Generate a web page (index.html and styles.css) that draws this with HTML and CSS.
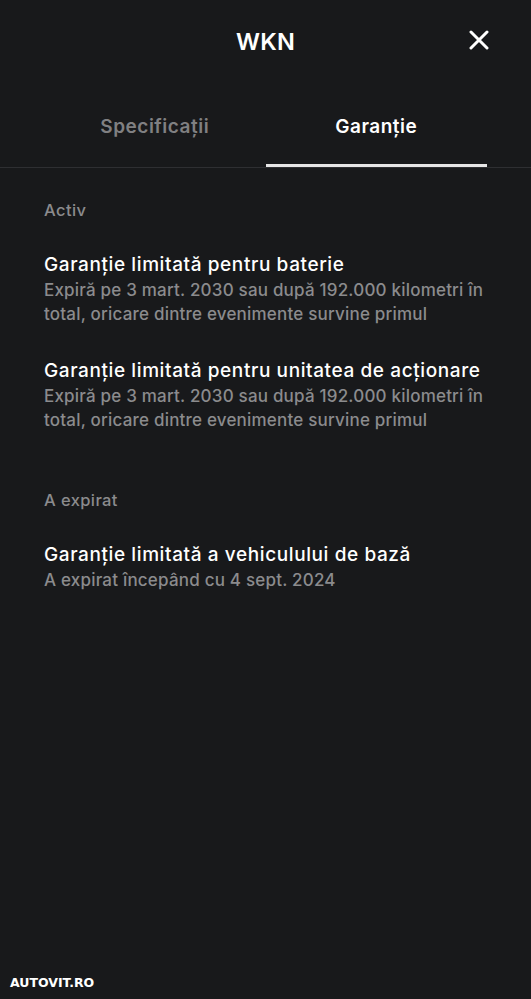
FILE: index.html
```html
<!DOCTYPE html>
<html lang="ro">
<head>
<meta charset="utf-8">
<link rel="stylesheet" href="styles.css">
</head>
<body>
<div class="page">
  <header class="header">
    <div class="title">WKN</div>
    <button class="close" aria-label="Închide">
      <svg width="20" height="20" viewBox="0 0 20 20"><path d="M2 2 L18 18 M18 2 L2 18" stroke="#fff" stroke-width="3" stroke-linecap="round"/></svg>
    </button>
  </header>
  <nav class="tabs">
    <div class="tab">Specificații</div>
    <div class="tab active">Garanție</div>
  </nav>
  <main class="content">
    <section class="group">
      <div class="group-label">Activ</div>
      <div class="item">
        <div class="item-title">Garanție limitată pentru baterie</div>
        <div class="item-sub">Expiră pe 3 mart. 2030 sau după 192.000 kilometri în total, oricare dintre evenimente survine primul</div>
      </div>
      <div class="item">
        <div class="item-title">Garanție limitată pentru unitatea de acționare</div>
        <div class="item-sub">Expiră pe 3 mart. 2030 sau după 192.000 kilometri în total, oricare dintre evenimente survine primul</div>
      </div>
    </section>
    <section class="group">
      <div class="group-label">A expirat</div>
      <div class="item">
        <div class="item-title">Garanție limitată a vehiculului de bază</div>
        <div class="item-sub">A expirat începând cu 4 sept. 2024</div>
      </div>
    </section>
  </main>
  <div class="watermark">AUTOVIT.RO</div>
</div>
</body>
</html>
```

FILE: styles.css
```css
* { box-sizing: border-box; }
html, body {
  margin: 0;
  padding: 0;
  background: #18191b;
}
body {
  font-family: Inter, "Noto Sans", sans-serif;
  color: #fff;
}
.page {
  position: relative;
  width: 531px;
  height: 999px;
  overflow: hidden;
  background: #18191b;
}
.header {
  position: relative;
  height: 82px;
  display: flex;
  align-items: center;
  justify-content: center;
}
.title {
  font-size: 23.5px;
  font-weight: 600;
  letter-spacing: 0.3px;
  margin-top: 1px;
}
.close {
  position: absolute;
  right: 42px;
  top: 30px;
  width: 20px;
  height: 20px;
  padding: 0;
  border: 0;
  background: none;
  display: flex;
}
.tabs {
  display: flex;
  padding: 0 44px;
  border-bottom: 1px solid #2e2f32;
  height: 86px;
}
.tab {
  flex: 1;
  text-align: center;
  font-size: 19px;
  font-weight: 600;
  letter-spacing: 0.5px;
  color: #808082;
  padding-top: 33px;
  border-bottom: 3px solid transparent;
}
.tab.active {
  color: #fff;
  border-bottom-color: #e6e6e6;
}
.content {
  padding: 31px 44px 0;
}
.group {
  display: flex;
  flex-direction: column;
  margin-bottom: 57px;
}
.group-label {
  font-size: 16.5px;
  font-weight: 500;
  letter-spacing: 0.4px;
  color: #8b8b8d;
  line-height: 22px;
  margin-bottom: 32px;
}
.item {
  margin-bottom: 33px;
}
.item:last-child { margin-bottom: 0; }
.item-title {
  font-size: 19px;
  font-weight: 500;
  letter-spacing: 0.6px;
  line-height: 24px;
  color: #fff;
  margin-bottom: 1px;
}
.item-sub {
  font-size: 17px;
  font-weight: 500;
  letter-spacing: 0.2px;
  line-height: 24px;
  color: #8b8b8d;
}
.watermark {
  position: absolute;
  left: 10px;
  bottom: 9px;
  font-family: "DejaVu Sans", sans-serif;
  font-weight: 700;
  font-size: 12.5px;
  letter-spacing: 0px;
  color: #fff;
}
```
